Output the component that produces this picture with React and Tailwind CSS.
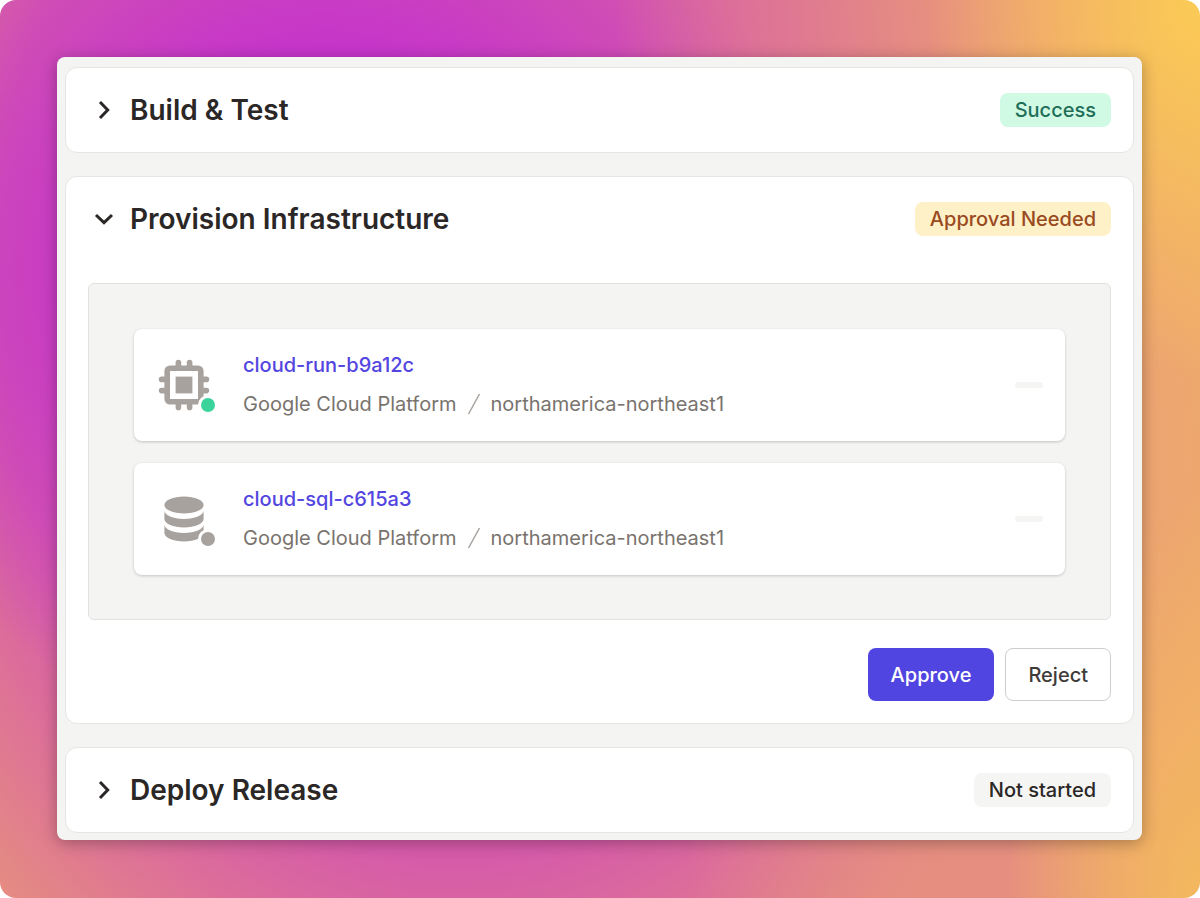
import React, { useState } from 'react';
import { HiChip, HiDatabase } from 'react-icons/hi';

const resources = [
    { id: 'cloud-run-b9a12c', icon: HiChip, provider: 'Google Cloud Platform', region: 'northamerica-northeast1', dot: 'bg-[#3bd39c]' },
    { id: 'cloud-sql-c615a3', icon: HiDatabase, provider: 'Google Cloud Platform', region: 'northamerica-northeast1', dot: 'bg-[#a8a29e]' },
];

const badgeStyles = {
    success: 'bg-[#d1fae5] text-[#1f6f58]',
    warning: 'bg-[#fef1c7] text-[#9a4a1f]',
    idle: 'bg-[#f5f5f4] text-[#2b2726]',
};

const Badge = ({ tone, children }) => (
    <span className={`rounded-lg px-[15px] text-xl leading-[34px] font-medium ${badgeStyles[tone]}`}>
        {children}
    </span>
);

const Chevron = ({ open }) => (
    <svg
        viewBox="0 0 28 28"
        className="ml-0.5 size-7"
        fill="none"
        stroke="currentColor"
        strokeWidth="3"
        aria-hidden="true"
    >
        <path d={open ? 'M6 10 14 17.7 22 10' : 'M10 6 17.7 14 10 22'} />
    </svg>
);

const Stage = ({ title, status, tone, defaultOpen = false, children }) => {
    const [open, setOpen] = useState(defaultOpen);

    return (
        <section className="rounded-xl border border-[#e7e5e4] bg-white px-[22px]">
            <header className="flex h-[84px] items-center justify-between">
                <h2 className="text-[28px] leading-9 font-semibold">
                    <button
                        type="button"
                        aria-expanded={open}
                        onClick={() => setOpen(!open)}
                        className="flex items-center gap-3"
                    >
                        <Chevron open={open} />
                        {title}
                    </button>
                </h2>
                <Badge tone={tone}>{status}</Badge>
            </header>
            {open && children}
        </section>
    );
};

const ResourceCard = ({ resource }) => {
    const Icon = resource.icon;

    return (
        <li className="flex h-28 items-center rounded-lg bg-white px-[22px] shadow-[0_1px_3px_rgba(0,0,0,0.2)]">
            <div className="relative shrink-0 text-[#a8a29e]">
                <Icon className="size-14" />
                <span className={`absolute -right-1.5 -bottom-0.5 size-5 rounded-full border-3 border-white ${resource.dot}`} />
            </div>
            <div className="ml-[31px] flex min-w-0 flex-1 flex-col gap-[11px] pb-0.5 text-xl leading-7">
                <a href="#" className="font-medium text-[#5346e0]">{resource.id}</a>
                <p className="flex items-center text-[#79736e]">
                    {resource.provider}
                    <svg viewBox="0 0 14 24" className="mx-2.5 h-6 w-3.5" fill="none" stroke="#a8a29e" strokeWidth="1.5">
                        <path d="M1.5 22 12.5 2" />
                    </svg>
                    {resource.region}
                </p>
            </div>
            <span className="h-1.5 w-7 rounded-sm bg-[#f5f5f4]" />
        </li>
    );
};

export default function App() {
    return (
        <div className="min-h-screen bg-white font-['Inter',sans-serif] text-[#2b2726]">
            <div className="min-h-screen rounded-[16px] bg-[radial-gradient(ellipse_23%_42%_at_100%_0%,#fbca55_0%,transparent_100%),radial-gradient(ellipse_16%_45%_at_100%_100%,#f3b85e_0%,transparent_100%),linear-gradient(85deg,transparent_54%,#e68f80_79%,#eda372_92%,#eeab6c_100%),radial-gradient(ellipse_35%_47%_at_27%_30%,#c535ca_52%,transparent_115%),radial-gradient(ellipse_40%_69%_at_38%_30%,#d65ba9_95%,#e68e80_140%)] py-[57px] pr-[58px] pl-[57px]">
                <main className="flex flex-col gap-[23px] rounded-lg bg-[#f4f4f3] px-2 pt-2.5 pb-[7px] shadow-[0_3px_16px_rgba(0,0,0,0.3)]">
                    <Stage title="Build & Test" status="Success" tone="success" />
                    <Stage title="Provision Infrastructure" status="Approval Needed" tone="warning" defaultOpen>
                        <ul className="mt-[22px] flex flex-col gap-[22px] rounded-md border border-[#e2e1df] bg-[#f4f4f3] px-[45px] pt-[45px] pb-11">
                            {resources.map(resource => (
                                <ResourceCard key={resource.id} resource={resource} />
                            ))}
                        </ul>
                        <div className="flex justify-end gap-[11px] pt-7 pb-[22px] text-xl leading-7 font-medium">
                            <button type="button" className="h-[53px] rounded-lg bg-[#5145e1] px-[23px] text-white">Approve</button>
                            <button type="button" className="h-[53px] rounded-lg border border-[#d0cecc] bg-white px-[22px] text-[#403b38]">Reject</button>
                        </div>
                    </Stage>
                    <Stage title="Deploy Release" status="Not started" tone="idle" />
                </main>
            </div>
        </div>
    );
}
